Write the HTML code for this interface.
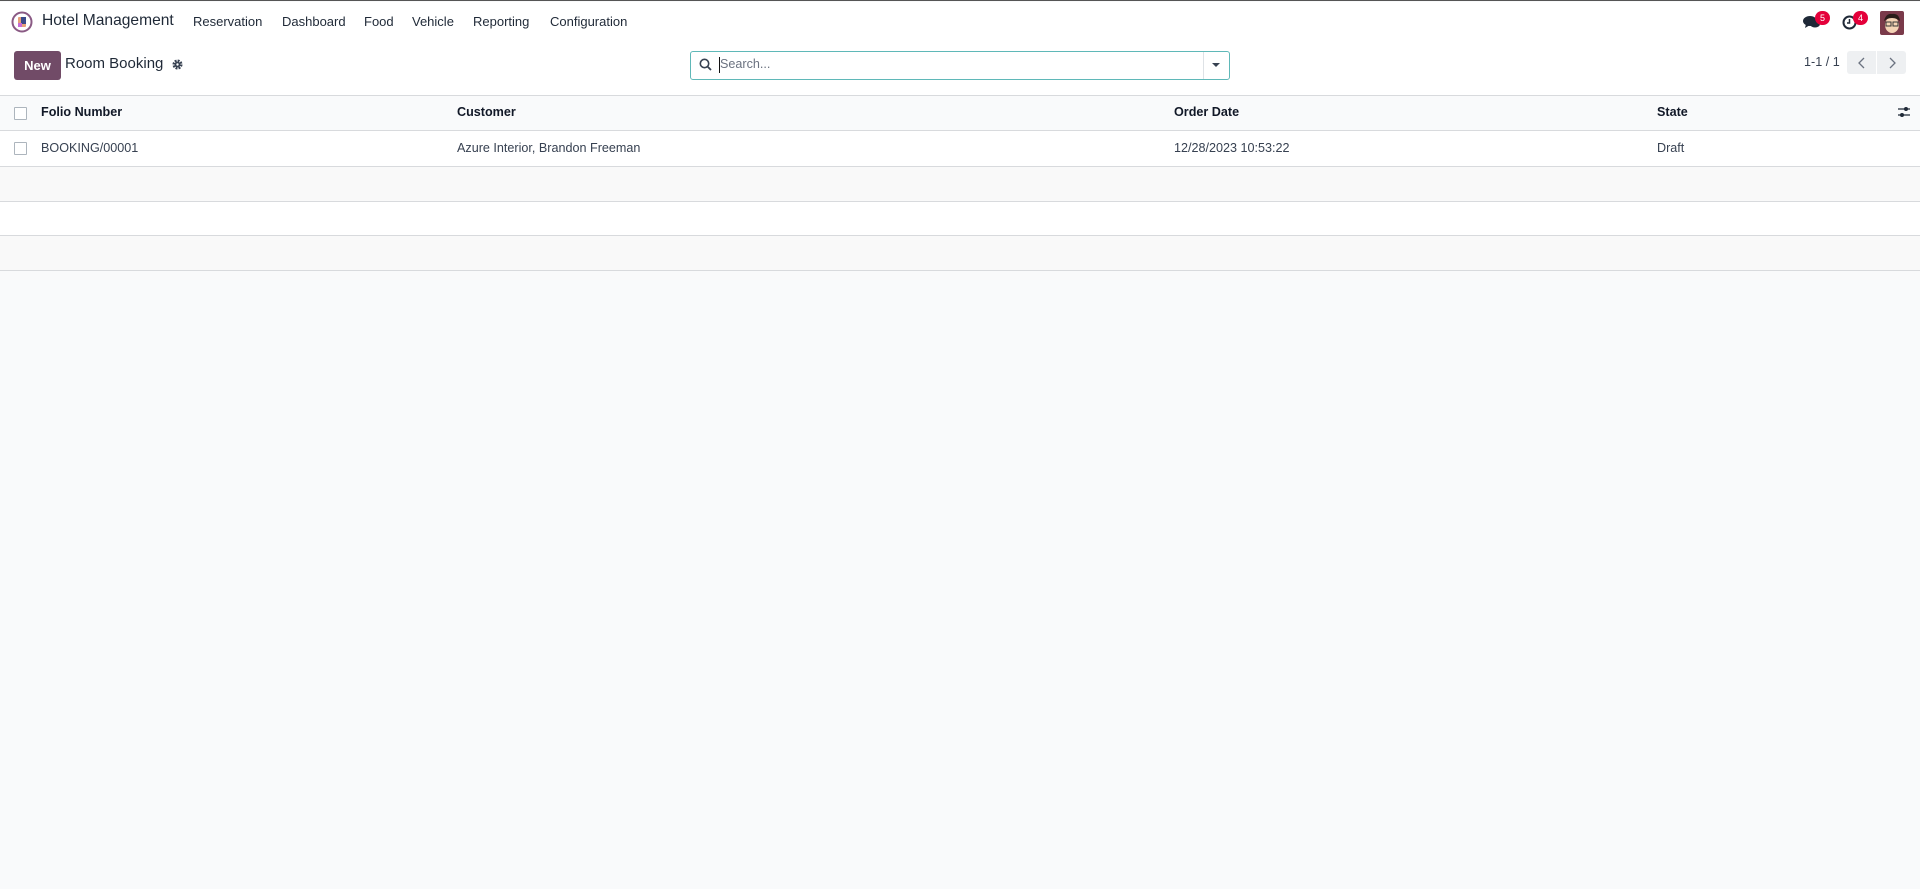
<!DOCTYPE html>
<html><head><meta charset="utf-8"><style>
*{box-sizing:border-box;margin:0;padding:0}
body{width:1920px;height:889px;overflow:hidden;background:#f9fafb;font-family:"Liberation Sans",sans-serif;color:#374151;font-size:13px;position:relative;border-top:1px solid #555}
.a{position:absolute;white-space:nowrap}
.top{position:absolute;left:0;top:1px;width:1920px;height:93px;background:#fff}
.menu{font-size:13px;color:#1f2937;top:13px}
.tbl{position:absolute;left:0;width:1920px}
.cb{position:absolute;left:14px;width:13px;height:13px;border:1px solid #adb5bd;background:#fff;border-radius:1px}
.h{font-weight:bold;color:#111827;font-size:12.6px;top:104px}
</style></head><body>
<div class="top"></div>
<svg class="a" style="left:11px;top:10px" width="22" height="22" viewBox="0 0 22 22"><circle cx="11" cy="11" r="9.5" fill="#fff" stroke="#8a5a84" stroke-width="2"/><rect x="7" y="6" width="8" height="10" rx="1" fill="#e8a07a"/><rect x="10" y="6" width="5" height="7" fill="#3b4a8a"/><rect x="7" y="12" width="4" height="4" fill="#c86ad6"/></svg>
<div class="a" style="left:42px;top:11px;font-size:15.6px;color:#1f2937">Hotel Management</div>
<div class="a menu" style="left:193px">Reservation</div>
<div class="a menu" style="left:282px">Dashboard</div>
<div class="a menu" style="left:364px">Food</div>
<div class="a menu" style="left:412px">Vehicle</div>
<div class="a menu" style="left:473px">Reporting</div>
<div class="a menu" style="left:550px">Configuration</div>
<svg class="a" style="left:1803px;top:14px" width="18" height="15" viewBox="0 0 18 15"><ellipse cx="7" cy="6" rx="7" ry="5" fill="#1f2937"/><path d="M3 9 L2 13 L7 10Z" fill="#1f2937"/><ellipse cx="12" cy="9" rx="5" ry="3.5" fill="#1f2937"/></svg>
<div class="a" style="left:1815px;top:10px;width:15px;height:14px;border-radius:7px;background:#e4003a;color:#fff;font-size:9px;text-align:center;line-height:14px">5</div>
<svg class="a" style="left:1842px;top:14px" width="15" height="15" viewBox="0 0 15 15"><circle cx="7.5" cy="7.5" r="6" fill="none" stroke="#1f2937" stroke-width="2"/><path d="M7.5 4V8H5" stroke="#1f2937" stroke-width="1.5" fill="none"/></svg>
<div class="a" style="left:1853px;top:10px;width:15px;height:14px;border-radius:7px;background:#e4003a;color:#fff;font-size:9px;text-align:center;line-height:14px">4</div>
<svg class="a" style="left:1880px;top:10px" width="24" height="24" viewBox="0 0 24 24"><rect width="24" height="24" rx="2" fill="#7a3a4a"/><ellipse cx="12" cy="14" rx="7" ry="8" fill="#f4d3b5"/><path d="M4 10Q6 2 12 3Q19 2 20 10L17 8Q12 6 7 8Z" fill="#2a1d1a"/><rect x="6" y="11" width="5" height="4" fill="none" stroke="#333"/><rect x="13" y="11" width="5" height="4" fill="none" stroke="#333"/></svg>

<div class="a" style="left:14px;top:50px;width:47px;height:29px;background:#714b67;border-radius:3px;color:#fff;font-weight:bold;font-size:13px;text-align:center;line-height:29px">New</div>
<div class="a" style="left:65px;top:54px;font-size:15px;color:#1f2937">Room Booking</div>
<svg class="a" style="left:172px;top:58px" width="11" height="11" viewBox="0 0 12 12"><circle cx="6" cy="6" r="4" fill="none" stroke="#374151" stroke-width="3" stroke-dasharray="2 1.15"/><circle cx="6" cy="6" r="3.2" fill="#374151"/><circle cx="6" cy="6" r="1.3" fill="#fff"/></svg>

<div class="a" style="left:690px;top:50px;width:540px;height:29px;border:1px solid #5fb8b8;border-radius:3px;background:#fff"></div>
<svg class="a" style="left:699px;top:57px" width="13" height="13" viewBox="0 0 13 13"><circle cx="5.5" cy="5.5" r="4.2" fill="none" stroke="#374151" stroke-width="1.6"/><path d="M8.6 8.6L12 12" stroke="#374151" stroke-width="1.8"/></svg>
<div class="a" style="left:719px;top:56px;width:1px;height:16px;background:#111"></div>
<div class="a" style="left:720px;top:56px;font-size:12.6px;color:#6b7280">Search...</div>
<div class="a" style="left:1203px;top:51px;width:1px;height:27px;background:#dee2e6"></div>
<div class="a" style="left:1212px;top:62px;width:0;height:0;border-left:4px solid transparent;border-right:4px solid transparent;border-top:4px solid #374151"></div>

<div class="a" style="left:1804px;top:54px;font-size:12.6px;color:#374151">1-1 / 1</div>
<div class="a" style="left:1847px;top:50px;width:29px;height:23px;background:#eef0f2;border-radius:3px 0 0 3px"></div>
<div class="a" style="left:1877px;top:50px;width:29px;height:23px;background:#eef0f2;border-radius:0 3px 3px 0"></div>
<svg class="a" style="left:1855px;top:55px" width="14" height="14" viewBox="0 0 14 14"><path d="M9 2L4 7L9 12" fill="none" stroke="#6b7280" stroke-width="1.3"/></svg>
<svg class="a" style="left:1885px;top:55px" width="14" height="14" viewBox="0 0 14 14"><path d="M5 2L10 7L5 12" fill="none" stroke="#6b7280" stroke-width="1.3"/></svg>

<div class="tbl" style="top:94px;height:36px;background:#f9fafb;border-top:1px solid #d8dadd;border-bottom:1px solid #d8dadd"></div>
<div class="cb" style="top:106px"></div>
<div class="a h" style="left:41px">Folio Number</div>
<div class="a h" style="left:457px">Customer</div>
<div class="a h" style="left:1174px">Order Date</div>
<div class="a h" style="left:1657px">State</div>
<svg class="a" style="left:1897px;top:104px" width="14" height="14" viewBox="0 0 14 14"><path d="M1 4H13M1 10H13" stroke="#1f2937" stroke-width="1.2"/><circle cx="9" cy="4" r="2" fill="#1f2937"/><circle cx="5" cy="10" r="2" fill="#1f2937"/></svg>

<div class="tbl" style="top:130px;height:36px;background:#fff;border-bottom:1px solid #d8dadd"></div>
<div class="cb" style="top:141px"></div>
<div class="a" style="left:41px;top:140px;font-size:12.6px">BOOKING/00001</div>
<div class="a" style="left:457px;top:140px;font-size:12.6px">Azure Interior, Brandon Freeman</div>
<div class="a" style="left:1174px;top:140px;font-size:12.6px">12/28/2023 10:53:22</div>
<div class="a" style="left:1657px;top:140px;font-size:12.6px">Draft</div>
<div class="tbl" style="top:166px;height:35px;background:#f9f9f9;border-bottom:1px solid #d8dadd"></div>
<div class="tbl" style="top:201px;height:34px;background:#fff;border-bottom:1px solid #d8dadd"></div>
<div class="tbl" style="top:235px;height:35px;background:#f9f9f9;border-bottom:1px solid #d8dadd"></div>
</body></html>
